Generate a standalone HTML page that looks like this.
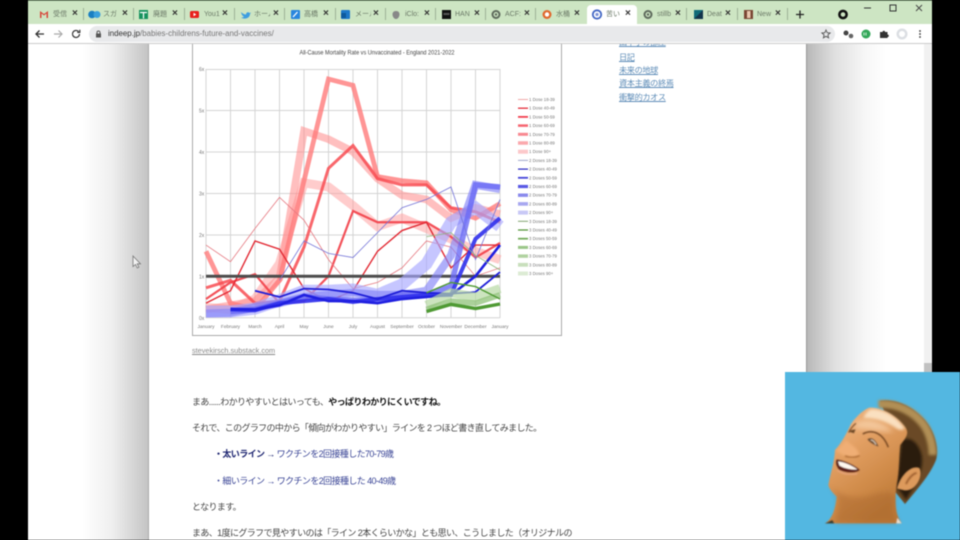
<!DOCTYPE html>
<html lang="ja"><head><meta charset="utf-8"><title>indeep</title>
<style>
html,body{margin:0;padding:0;width:960px;height:540px;overflow:hidden;background:#000}
#w{position:absolute;left:0;top:0;width:960px;height:540px;overflow:hidden;filter:blur(.4px);font-family:"Liberation Sans","Noto Sans CJK JP",sans-serif}
.a{position:absolute;white-space:nowrap}
#strip{left:28px;top:0;width:904px;height:24px;background:#cde5c3;border-top:1px solid #7d9a78;box-sizing:border-box}
#bar{left:28px;top:24px;width:904px;height:20px;background:#fff;border-bottom:1px solid #ccc;box-sizing:border-box}
#addr{left:89px;top:26px;width:746px;height:16px;border-radius:8px;background:#e8e9eb}
#page{left:28px;top:44px;width:904px;height:496px;background:#fff}
#ls{left:28px;top:44px;width:121px;height:496px;background:linear-gradient(90deg,#fff 0,#fff 45%,#efefef 70%,#c4c4c4 100%);border-right:1px solid #aaa;box-sizing:border-box}
#rs{left:806px;top:44px;width:118px;height:496px;background:linear-gradient(90deg,#b8b8b8 0,#e0e0e0 24%,#f7f7f7 50%,#fff 68%);border-left:1px solid #999;box-sizing:border-box}
#sb{left:924px;top:44px;width:8px;height:496px;background:#f1f1f1}
#th{left:924px;top:363px;width:8px;height:12px;background:#c1c1c1}
.t{font-size:7px;color:#6c7a68;top:10px;width:16px;overflow:hidden;line-height:10px}
.x{font-size:10px;color:#333;font-weight:bold;top:8px;line-height:12px}
.sp{width:1px;height:12px;top:8px;background:#9db296}
.l{font-size:8.200px;letter-spacing:-.4px;color:#5f8db8;text-decoration:underline;left:619px;line-height:12px}
.p{font-size:9px;color:#444;left:192px;line-height:13px}
.p b{color:#111}
</style></head><body><div id="w">
<div class="a" id="strip"></div>
<div class="a" id="bar"></div>
<div class="a" style="left:587px;top:5px;width:50px;height:19px;background:#fff;border-radius:4px 4px 0 0"></div>

<svg class="a" style="left:0;top:0" width="960" height="44" viewBox="0 0 960 44">
<path d="M40 11v7h1.500v-4.500l2.500 2 2.500-2V18H48v-7l-4 3z" fill="#d8453a"/>
<circle cx="92" cy="14.500" r="3.800" fill="#1a7fc1"/><circle cx="97" cy="14.500" r="3.500" fill="#3aa0dc"/>
<rect x="139" y="10" width="9" height="9" fill="#16925e"/><path d="M140 12.500h7M143.500 12.500v6" stroke="#fff" stroke-width="1.200"/>
<rect x="190" y="11" width="9" height="7" rx="1.500" fill="#e8211c"/><path d="M193.500 12.800v3.400l2.800-1.700z" fill="#fff"/>
<path d="M241 12c2 2 4 2.500 5 2.500 0-2 2-3 3.500-1.500l1.500-.5-1 1.500c0 4-5 6-9 3.500 1.500 0 2.500-.3 3-1-1.500-.3-2.500-2-3-4.500z" fill="#3e9ee0"/>
<rect x="291" y="10" width="9" height="9" rx="1" fill="#2a86de"/><path d="M293 17l4.500-5" stroke="#fff" stroke-width="1.300"/>
<rect x="341" y="10" width="9" height="9" rx="1" fill="#1d78c8"/><rect x="341" y="13" width="5" height="5" fill="#0d5a9e"/>
<path d="M396 11c-2.500 0-3.500 1.500-3.500 3.500s1.500 4.500 3.500 4.500 3.500-2.500 3.500-4.500-1-3.500-3.500-3.500z" fill="#888"/>
<rect x="442" y="10" width="9" height="9" fill="#111"/><rect x="443.500" y="13" width="6" height="2" fill="#555"/>
<circle cx="496" cy="14.500" r="3.500" fill="none" stroke="#5f6b5d" stroke-width="2"/><circle cx="496" cy="14.500" r="1.200" fill="#5f6b5d"/>
<circle cx="547" cy="14.500" r="4.500" fill="#e0692f"/><circle cx="547" cy="14.500" r="2.200" fill="#fff"/>
<circle cx="597" cy="14.500" r="4.200" fill="none" stroke="#4266c4" stroke-width="1.800"/><circle cx="597" cy="14.500" r="1.600" fill="#7e93d8"/>
<circle cx="648" cy="14.500" r="3.500" fill="none" stroke="#5f6b5d" stroke-width="2"/><circle cx="648" cy="14.500" r="1.200" fill="#5f6b5d"/>
<rect x="694" y="10" width="9" height="9" fill="#0f6a78"/><path d="M694 19l9-9v9z" fill="#12344c"/>
<rect x="744" y="10" width="9" height="9" fill="#7a4634"/><rect x="747" y="11" width="3.500" height="7" fill="#e8c6ae"/>
<path d="M796 14.500h8M800 10.500v8" stroke="#222" stroke-width="1.300"/>
<circle cx="843" cy="14.500" r="3.600" fill="none" stroke="#111" stroke-width="2.600"/>
<path d="M864 8h7" stroke="#333" stroke-width="1"/>
<rect x="890" y="5" width="6" height="6" fill="none" stroke="#333"/>
<path d="M916 5l6 6m0-6l-6 6" stroke="#444" stroke-width=".9"/>
</svg>

<div class="a t" style="left:53px">受信</div><div class="a x" style="left:72px">×</div><div class="a sp" style="left:83px"></div>
<div class="a t" style="left:103px">スガ</div><div class="a x" style="left:122px">×</div><div class="a sp" style="left:133px"></div>
<div class="a t" style="left:153px">廃題</div><div class="a x" style="left:172px">×</div><div class="a sp" style="left:184px"></div>
<div class="a t" style="left:204px">You1</div><div class="a x" style="left:222px">×</div><div class="a sp" style="left:234px"></div>
<div class="a t" style="left:254px">ホーム</div><div class="a x" style="left:273px">×</div><div class="a sp" style="left:284px"></div>
<div class="a t" style="left:304px">高橋</div><div class="a x" style="left:323px">×</div><div class="a sp" style="left:335px"></div>
<div class="a t" style="left:355px">メール</div><div class="a x" style="left:373px">×</div><div class="a sp" style="left:385px"></div>
<div class="a t" style="left:405px">iClo:</div><div class="a x" style="left:424px">×</div><div class="a sp" style="left:435px"></div>
<div class="a t" style="left:455px">HAN</div><div class="a x" style="left:474px">×</div><div class="a sp" style="left:485px"></div>
<div class="a t" style="left:505px">ACF:</div><div class="a x" style="left:524px">×</div><div class="a sp" style="left:535px"></div>
<div class="a t" style="left:556px">水桶</div><div class="a x" style="left:574px">×</div>
<div class="a t" style="left:606px">苦い</div><div class="a x" style="left:625px">×</div>
<div class="a t" style="left:657px">stillb</div><div class="a x" style="left:675px">×</div><div class="a sp" style="left:686px"></div>
<div class="a t" style="left:707px">Deat</div><div class="a x" style="left:725px">×</div><div class="a sp" style="left:737px"></div>
<div class="a t" style="left:757px">New</div><div class="a x" style="left:775px">×</div><div class="a sp" style="left:787px"></div>

<div class="a" id="addr"></div>
<div class="a" style="left:108px;top:28px;font-size:7.900px;line-height:12px;color:#777"><span style="color:#333">indeep.jp</span>/babies-childrens-future-and-vaccines/</div>
<svg class="a" style="left:0;top:24px" width="960" height="20" viewBox="0 24 960 20">
<path d="M44 34h-8m3.500-3.500L36 34l3.500 3.500" fill="none" stroke="#333" stroke-width="1.300"/>
<path d="M54 34h8m-3.500-3.500L62 34l-3.500 3.500" fill="none" stroke="#aaa" stroke-width="1.200"/>
<path d="M79.500 34a3.500 3.500 0 1 1-1-2.500M79.800 29.800v2.600h-2.600" fill="none" stroke="#333" stroke-width="1.200"/>
<rect x="96" y="33.500" width="5" height="4" fill="#555"/><path d="M97 33.500v-1a1.500 1.500 0 0 1 3 0v1" fill="none" stroke="#555"/>
<path d="M826 30l1.200 2.700 2.900.3-2.200 1.900.7 2.900-2.600-1.500-2.600 1.500.7-2.900-2.200-1.900 2.900-.3z" fill="none" stroke="#555" stroke-width=".9"/>
<circle cx="846" cy="33" r="2.500" fill="#444"/><circle cx="851" cy="36" r="2.300" fill="#666"/>
<circle cx="866" cy="34" r="4.500" fill="#34a85a"/><path d="M864 32.500v3m2-3v3" stroke="#cdeed8"/>
<path d="M880 32h2.500a1.300 1.300 0 0 1 2.600 0h2.400v2.500a1.300 1.300 0 0 1 0 2.600V38h-7.500z" fill="#333"/>
<circle cx="902" cy="34" r="5.500" fill="#dcdfe3"/><circle cx="902" cy="34" r="3" fill="#fff"/>
<circle cx="920" cy="31" r=".9" fill="#333"/><circle cx="920" cy="34" r=".9" fill="#333"/><circle cx="920" cy="37" r=".9" fill="#333"/>
</svg>

<div class="a" id="page"></div>
<div class="a" id="ls"></div>
<div class="a" id="rs"></div>
<div class="a" id="sb"></div><div class="a" id="th"></div>

<svg class="a" style="left:0;top:44px" width="960" height="310" viewBox="0 44 960 310">
<style>.g polyline{fill:none;vector-effect:non-scaling-stroke;stroke-linejoin:miter}
text{font-family:"Liberation Sans",sans-serif}</style>
<path d="M192.500 44V335.500H561.500V44" fill="none" stroke="#aaa" stroke-width="1"/>
<g stroke="#d4d4d4" stroke-width="1" fill="none">
<path d="M206 69.500H500M206 110.500H500M206 152H500M206 193.500H500M206 235H500M206 317.700H500"/>
<path d="M206 69V318M230.500 69V318M255 69V318M279.500 69V318M304 69V318M328.500 69V318M353 69V318M377.500 69V318M402 69V318M426.500 69V318M451 69V318M475.500 69V318M500 69V318"/>
</g>
<g fill="#777" font-size="5">
<text x="199" y="71">6x</text><text x="199" y="112.500">5x</text><text x="199" y="154">4x</text><text x="199" y="195.500">3x</text><text x="199" y="237">2x</text><text x="199" y="278.500">1x</text><text x="199" y="320">0x</text>
</g>
<text x="377" y="54.500" text-anchor="middle" font-size="6.200" fill="#444" textLength="155" lengthAdjust="spacingAndGlyphs">All-Cause Mortality Rate vs Unvaccinated - England 2021-2022</text>
<g fill="#777" font-size="4.800" text-anchor="middle">
<text x="206" y="328">January</text><text x="230.500" y="328">February</text><text x="255" y="328">March</text><text x="279.500" y="328">April</text><text x="304" y="328">May</text><text x="328.500" y="328">June</text><text x="353" y="328">July</text><text x="377.500" y="328">August</text><text x="402" y="328">September</text><text x="426.500" y="328">October</text><text x="451" y="328">November</text><text x="475.500" y="328">December</text><text x="500" y="328">January</text>
</g>
<g class="g" transform="translate(206,317.7) scale(24.5,-41.5)">
<polyline stroke="#ff9a9a" stroke-opacity=".5" stroke-width="9" points="0,.25 1,.2 2,.45 3,1.3 4,3.25 5,3.15 6,2.7 7,2.2 8,2.4 9,2.15 10,1.9 11,1.6 12,1.4"/>
<polyline stroke="#ff8b8b" stroke-opacity=".55" stroke-width="7.500" points="0,.2 1,.3 2,.4 3,.95 4,4.5 5,4.3 6,4 7,3.35 8,2.95 9,2.85 10,2.4 11,2.65 12,2.5"/>
<polyline stroke="#ff7a7a" stroke-opacity=".8" stroke-width="4.800" points="0,1.6 1,.35 2,.2 3,.9 4,3.3 5,5.75 6,5.6 7,3.4 8,3.3 9,3.25 10,2.6 11,2.4 12,2.75"/>
<polyline stroke="#f84c52" stroke-opacity=".85" stroke-width="3" points="0,.72 1,.9 2,.35 3,.4 4,1.7 5,3.6 6,4.15 7,3.35 8,3.2 9,3.2 10,2.65 11,2.55 12,2.3"/>
<polyline stroke="#f23f48" stroke-opacity=".9" stroke-width="2.200" points="0,.45 1,.85 2,1.05 3,.35 4,.4 5,1 6,2.57 7,2.3 8,2.3 9,2.3 10,1.95 11,1.45 12,1.8"/>
<polyline stroke="#e22a34" stroke-width="1.400" points="0,.35 1,.65 2,1.85 3,1.65 4,.7 5,.4 6,.65 7,1.6 8,2.1 9,2.3 10,1.2 11,1.75 12,1.75"/>
<polyline stroke="#e67a82" stroke-width=".8" points="0,1.75 1,1.35 2,2.15 3,2.9 4,2.35 5,1.4 6,.7 7,.85 8,1.2 9,1.85 10,1.7 11,1 12,1.2"/>
<polyline stroke="#4c4c4c" stroke-width="3" points="0,1 12,1"/>
<polyline stroke="#a8a8ff" stroke-opacity=".65" stroke-width="12" points="0,.15 1,.15 2,.22 3,.42 4,.65 5,.65 6,.68 7,.55 8,.8 9,1.3 10,2.3 11,2.65 12,2.2"/>
<polyline stroke="#8484f8" stroke-opacity=".65" stroke-width="8" points="0,.1 1,.12 2,.25 3,.35 4,.5 5,.55 6,.6 7,.55 8,.55 9,.65 10,1.5 11,3.2 12,3.1"/>
<polyline stroke="#6a6af5" stroke-opacity=".8" stroke-width="5.500" points="1,.15 2,.2 3,.35 4,.5 5,.45 6,.42 7,.42 8,.55 9,.55 10,.75 11,3.2 12,3.15"/>
<polyline stroke="#3030ec" stroke-opacity=".9" stroke-width="4" points="1,.2 2,.18 3,.35 4,.4 5,.45 6,.38 7,.45 8,.5 9,.55 10,.55 11,1.9 12,2.4"/>
<polyline stroke="#2020e0" stroke-width="2.600" points="1,.2 2,.2 3,.3 4,.55 5,.4 6,.4 7,.35 8,.45 9,.5 10,.55 11,1 12,1.75"/>
<polyline stroke="#1f1fd8" stroke-width="1.800" points="2,.65 3,.5 4,.7 5,.68 6,.6 7,.45 8,.65 9,.6 10,.58 11,.62 12,1.1"/>
<polyline stroke="#7575d8" stroke-width=".8" points="3,.9 4,1.85 5,1.55 6,1.45 7,2.05 8,2.65 9,2.85 10,3.15 11,1.4 12,2.85"/>
<polyline stroke="#b6d9a4" stroke-opacity=".7" stroke-width="9" points="9,.3 10,.6 11,.5 12,.7"/>
<polyline stroke="#8fc178" stroke-opacity=".75" stroke-width="5.500" points="9,.2 10,.4 11,.35 12,.55"/>
<polyline stroke="#4f9a34" stroke-width="3.400" points="9,.15 10,.32 11,.22 12,.33"/>
<polyline stroke="#4f9a34" stroke-width="1.400" points="9,.6 10,.85 11,.75 12,.45"/>
<polyline stroke="#8fb67c" stroke-width=".8" points="9,1.95 10,2.05 11,1.5 12,1.15"/>
</g>
<g fill="none">
<path d="M518 99.500h10" stroke="#f0a8a8" stroke-width="1"/><path d="M518 108.200h10" stroke="#e21e2c" stroke-width="1.200"/><path d="M518 116.900h10" stroke="#f24050" stroke-width="1.800"/><path d="M518 125.600h10" stroke="#f66570" stroke-width="2.500"/><path d="M518 134.300h10" stroke="#f88890" stroke-width="3"/><path d="M518 143h10" stroke="#fba8ac" stroke-width="3.500"/><path d="M518 151.700h10" stroke="#fcc8ca" stroke-width="4"/>
<path d="M518 160.400h10" stroke="#a0a8cc" stroke-width="1"/><path d="M518 169.100h10" stroke="#2626c0" stroke-width="1.200"/><path d="M518 177.800h10" stroke="#4444d8" stroke-width="1.800"/><path d="M518 186.500h10" stroke="#5a5ae4" stroke-width="3.200"/><path d="M518 195.200h10" stroke="#8a8aec" stroke-width="3.400"/><path d="M518 203.900h10" stroke="#a8a8f0" stroke-width="3.600"/><path d="M518 212.600h10" stroke="#c8c8f6" stroke-width="4"/>
<path d="M518 221.300h10" stroke="#82a470" stroke-width="1"/><path d="M518 230h10" stroke="#4c9030" stroke-width="1.200"/><path d="M518 238.700h10" stroke="#74ac5c" stroke-width="1.800"/><path d="M518 247.400h10" stroke="#9ac688" stroke-width="3"/><path d="M518 256.100h10" stroke="#b0d2a0" stroke-width="3.400"/><path d="M518 264.800h10" stroke="#c8dfbc" stroke-width="3.800"/><path d="M518 273.500h10" stroke="#dcebd4" stroke-width="4"/>
</g>
<g fill="#777" font-size="4.300">
<text x="529" y="101">1 Dose 18-39</text><text x="529" y="109.700">1 Dose 40-49</text><text x="529" y="118.400">1 Dose 50-59</text><text x="529" y="127.100">1 Dose 60-69</text><text x="529" y="135.800">1 Dose 70-79</text><text x="529" y="144.500">1 Dose 80-89</text><text x="529" y="153.200">1 Dose 90+</text>
<text x="529" y="161.900">2 Doses 18-39</text><text x="529" y="170.600">2 Doses 40-49</text><text x="529" y="179.300">2 Doses 50-59</text><text x="529" y="188">2 Doses 60-69</text><text x="529" y="196.700">2 Doses 70-79</text><text x="529" y="205.400">2 Doses 80-89</text><text x="529" y="214.100">2 Doses 90+</text>
<text x="529" y="222.800">3 Doses 18-39</text><text x="529" y="231.500">3 Doses 40-49</text><text x="529" y="240.200">3 Doses 50-59</text><text x="529" y="248.900">3 Doses 60-69</text><text x="529" y="257.600">3 Doses 70-79</text><text x="529" y="266.300">3 Doses 80-89</text><text x="529" y="275">3 Doses 90+</text>
</g>
</svg>

<div class="a" style="left:192px;top:345px;font-size:7.300px;line-height:12px;color:#888;text-decoration:underline">stevekirsch.substack.com</div>

<div class="a" style="left:0;top:44px;width:960px;height:4px;overflow:hidden"><div class="a l" style="top:-7px">田中宇の部屋</div></div>
<div class="a l" style="top:52px">日記</div>
<div class="a l" style="top:65px">未来の地球</div>
<div class="a l" style="top:78px">資本主義の終焉</div>
<div class="a l" style="top:92px">衝撃的カオス</div>

<div class="a p" style="top:396px;letter-spacing:-.6px">まあ......わかりやすいとはいっても、<b>やっぱりわかりにくいですね。</b></div>
<div class="a p" style="top:422px;letter-spacing:-.65px">それで、このグラフの中から「傾向がわかりやすい」ラインを 2 つほど書き直してみました。</div>
<div class="a p" style="top:448px;left:214px;color:#3a4596;letter-spacing:-.6px"><b style="color:#1c2470">・太いライン →</b> ワクチンを2回接種した70-79歳</div>
<div class="a p" style="top:475px;left:214px;color:#3a4596;letter-spacing:-.59px">・細いライン → ワクチンを2回接種した 40-49歳</div>
<div class="a p" style="top:501px;letter-spacing:-.63px">となります。</div>
<div class="a p" style="top:527px;letter-spacing:-.61px">まあ、1度にグラフで見やすいのは「ライン 2本くらいかな」とも思い、こうしました（オリジナルの</div>

<svg class="a" style="left:131px;top:254px" width="12" height="16" viewBox="0 0 12 16"><path d="M2 2v10.500l2.500-2 1.800 3.500 1.600-.8-1.700-3.400H9.500z" fill="#f2f2f2" stroke="#777" stroke-width=".8"/></svg>

<div class="a" style="left:785px;top:372px;width:175px;height:168px;background:#53b7e1"></div>
<svg class="a" style="left:780px;top:360px" width="180" height="180" viewBox="0 0 540 540">
<defs>
<linearGradient id="sk" x1="0" y1="0" x2=".5" y2="1"><stop offset="0" stop-color="#f2c090"/><stop offset=".4" stop-color="#e3a064"/><stop offset=".75" stop-color="#cf8a48"/><stop offset="1" stop-color="#bd7a38"/></linearGradient>
<filter id="f1" x="-20%" y="-20%" width="140%" height="140%"><feGaussianBlur stdDeviation="4"/></filter>
<filter id="f2" x="-20%" y="-20%" width="140%" height="140%"><feGaussianBlur stdDeviation="8"/></filter>
<filter id="f0" x="-10%" y="-10%" width="120%" height="120%"><feGaussianBlur stdDeviation="1.200"/></filter>
</defs>
<g filter="url(#f0)">
<path d="M300 122C345 115 395 135 435 180 465 215 478 265 468 300 450 345 410 390 375 432L345 395 345 240z" fill="#6a4a26"/>
<path d="M295 133C350 128 405 155 435 200 450 225 458 250 458 285" fill="none" stroke="#b18f55" stroke-width="24" filter="url(#f1)"/>
<path d="M365 240C388 228 415 245 425 285 432 320 415 360 378 420L350 380z" fill="#2c1a0c" filter="url(#f1)"/>
<path d="M268 143C300 140 350 165 378 205 388 225 372 238 360 255 356 290 358 330 350 370 345 410 345 450 355 472L365 490H135C150 482 165 460 170 410 158 398 148 388 145 375 150 345 163 310 165 270 180 255 195 230 213 192 230 168 250 150 268 143z" fill="url(#sk)"/>
<path d="M272 148C310 146 350 170 374 205 366 212 356 210 345 202 320 186 290 174 250 174 256 160 264 152 272 148z" fill="#fae0c0" filter="url(#f1)"/>
<path d="M225 190C260 170 300 180 340 215 310 215 260 205 225 205z" fill="#f4c89c" filter="url(#f2)"/>
<path d="M168 272C178 262 190 252 198 240 212 254 236 265 238 285 232 295 205 292 188 285z" fill="#f0ae74" filter="url(#f1)"/>
<path d="M195 288c15 6 32 6 44-2" stroke="#a5622a" stroke-width="4" fill="none" filter="url(#f0)"/>
<path d="M206 218c4-10 14-22 22-28" stroke="#7a4a24" stroke-width="4" fill="none"/>
<path d="M205 215c7-5 15-7 22-7l-5 12z" fill="#6e4828"/>
<path d="M248 222C280 205 310 222 325 262" stroke="#7a4a22" stroke-width="5" fill="none"/>
<path d="M262 238C275 228 288 240 296 260 280 254 270 248 262 238z" fill="#6c4c30"/>
<path d="M272 240c6 0 12 6 16 14" stroke="#eadccc" stroke-width="3" fill="none"/>
<path d="M170 298C190 300 225 315 240 330 225 342 195 338 178 330 168 320 165 305 170 298z" fill="#5a1e16"/>
<path d="M174 304C190 305 215 315 232 328 215 331 190 325 178 317z" fill="#fff8f0"/>
<path d="M172 330c18 12 40 16 60 10" stroke="#e8a47c" stroke-width="5" fill="none" filter="url(#f0)"/>
<path d="M150 380C185 412 235 420 285 402 320 392 348 398 345 415 335 450 345 475 358 488H165C172 460 176 430 172 408z" fill="#a4622a" opacity=".4" filter="url(#f2)"/>
<path d="M352 385C362 345 395 315 418 325 430 350 405 395 372 390z" fill="#dd9a5c"/>
<path d="M378 372c8-18 22-32 32-33" stroke="#96592a" stroke-width="5" fill="none" filter="url(#f0)"/>
<path d="M135 490l22-10 6 10z" fill="#2f3a30"/>
<path d="M352 474l13 16h-16z" fill="#e8e0d0"/>
</g>
</svg>
</div></body></html>
